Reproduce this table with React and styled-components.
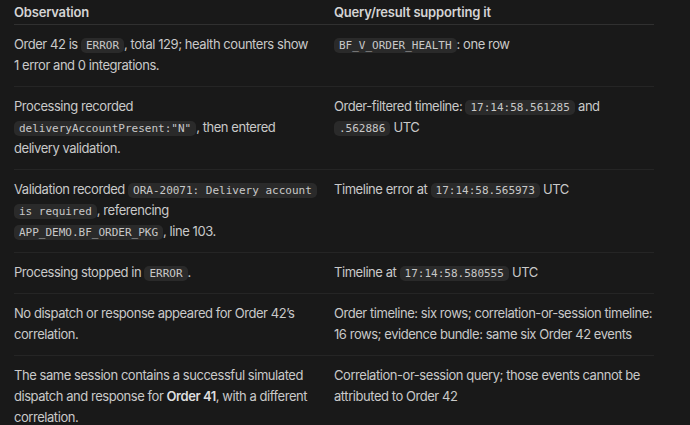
import React from "react";
import styled, { createGlobalStyle } from "styled-components";

const GlobalStyle = createGlobalStyle`
  html, body {
    margin: 0;
    padding: 0;
    background: #191919;
  }
  body {
    font-family: Inter, "Noto Sans", sans-serif;
    -webkit-font-smoothing: antialiased;
  }
`;

const Page = styled.div`
  width: 690px;
  height: 425px;
  overflow: hidden;
  background: #191919;
  padding: 0 36px 0 14px;
  box-sizing: border-box;
`;

const Table = styled.div`
  width: 640px;
  display: flex;
  flex-direction: column;
`;

const Row = styled.div`
  display: grid;
  grid-template-columns: 320px 320px;
  border-bottom: 1px solid ${(p) => (p.$head ? "#303030" : "#252525")};
`;

const Cell = styled.div`
  font-size: 13px;
  line-height: 21px;
  color: #c9c9c9;
  padding: 9px ${(p) => (p.$last ? "0" : "12px")} 10px 0;
  letter-spacing: -0.45px;
  min-width: 0;
`;

const HeadCell = styled(Cell)`
  font-weight: 600;
  color: #d4d4d4;
  padding-top: 2px;
  padding-bottom: 1px;
  letter-spacing: -0.2px;
`;

const Code = styled.code`
  font-family: "DejaVu Sans Mono", "Liberation Mono", monospace;
  font-size: 11px;
  line-height: 0;
  color: #c8c8c8;
  background: #2a2a2a;
  border-radius: 5px;
  padding: 1px 5px;
  letter-spacing: 0;
  box-decoration-break: clone;
  -webkit-box-decoration-break: clone;
`;

const Strong = styled.strong`
  font-weight: 600;
  color: #dedede;
`;

const rows = [
  [
    <>Order 42 is <Code>ERROR</Code>, total 129; health counters show<br />1 error and 0 integrations.</>,
    <><Code>BF_V_ORDER_HEALTH</Code>: one row</>,
  ],
  [
    <>Processing recorded<br /><Code>deliveryAccountPresent:"N"</Code>, then entered delivery validation.</>,
    <>Order-filtered timeline: <Code>17:14:58.561285</Code> and <Code>.562886</Code> UTC</>,
  ],
  [
    <>Validation recorded <Code>ORA-20071: Delivery account is required</Code>, referencing <Code>APP_DEMO.BF_ORDER_PKG</Code>, line 103.</>,
    <>Timeline error at <Code>17:14:58.565973</Code> UTC</>,
  ],
  [
    <>Processing stopped in <Code>ERROR</Code>.</>,
    <>Timeline at <Code>17:14:58.580555</Code> UTC</>,
  ],
  [
    <>No dispatch or response appeared for Order 42’s correlation.</>,
    <>Order timeline: six rows; correlation-or-session timeline: 16 rows; evidence bundle: same six Order 42 events</>,
  ],
  [
    <>The same session contains a successful simulated dispatch and response for <Strong>Order 41</Strong>, with a different correlation.</>,
    <>Correlation-or-session query; those events cannot be attributed to Order 42</>,
  ],
];

export default function App() {
  return (
    <>
      <GlobalStyle />
      <Page>
        <Table>
          <Row $head>
            <HeadCell>Observation</HeadCell>
            <HeadCell $last>Query/result supporting it</HeadCell>
          </Row>
          {rows.map(([obs, query], i) => (
            <Row key={i}>
              <Cell>{obs}</Cell>
              <Cell $last>{query}</Cell>
            </Row>
          ))}
        </Table>
      </Page>
    </>
  );
}
